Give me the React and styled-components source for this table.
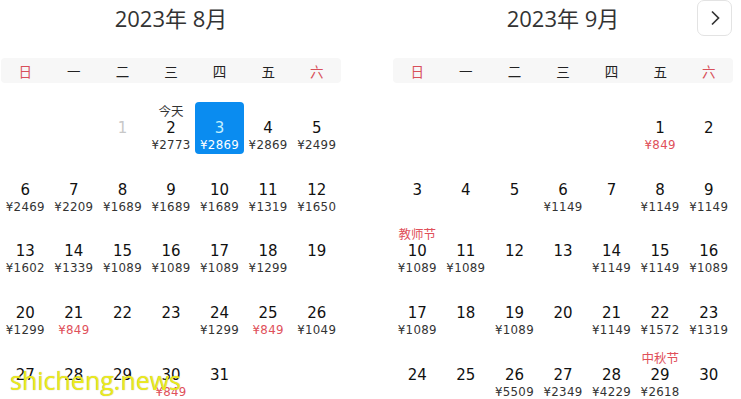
import React from 'react'
import styled, { createGlobalStyle } from 'styled-components'

const GlobalStyle = createGlobalStyle`
  html, body {
    margin: 0;
    padding: 0;
    background: #fff;
  }
  body {
    font-family: 'DejaVu Sans', 'Noto Sans CJK SC', sans-serif;
    color: #222;
  }
`

const WEEKDAYS = ['日', '一', '二', '三', '四', '五', '六']

// price: number, cheap: red price, label: text above the day
const MONTHS = [
  {
    title: '2023年 8月',
    offset: 2,
    days: 31,
    info: {
      1: { disabled: true },
      2: { price: 2773, label: '今天', labelTone: 'plain' },
      3: { price: 2869, selected: true },
      4: { price: 2869 },
      5: { price: 2499 },
      6: { price: 2469 },
      7: { price: 2209 },
      8: { price: 1689 },
      9: { price: 1689 },
      10: { price: 1689 },
      11: { price: 1319 },
      12: { price: 1650 },
      13: { price: 1602 },
      14: { price: 1339 },
      15: { price: 1089 },
      16: { price: 1089 },
      17: { price: 1089 },
      18: { price: 1299 },
      20: { price: 1299 },
      21: { price: 849, cheap: true },
      24: { price: 1299 },
      25: { price: 849, cheap: true },
      26: { price: 1049 },
      30: { price: 849, cheap: true },
    },
  },
  {
    title: '2023年 9月',
    offset: 5,
    days: 30,
    next: true,
    info: {
      1: { price: 849, cheap: true },
      6: { price: 1149 },
      8: { price: 1149 },
      9: { price: 1149 },
      10: { price: 1089, label: '教师节' },
      11: { price: 1089 },
      14: { price: 1149 },
      15: { price: 1149 },
      16: { price: 1089 },
      17: { price: 1089 },
      19: { price: 1089 },
      21: { price: 1149 },
      22: { price: 1572 },
      23: { price: 1319 },
      26: { price: 5509 },
      27: { price: 2349 },
      28: { price: 4229 },
      29: { price: 2618, label: '中秋节' },
    },
  },
]

const Page = styled.div`
  position: relative;
  display: flex;
  gap: 52px;
  padding-left: 1px;
  height: 399px;
  overflow: hidden;
`

const Month = styled.section`
  width: 340px;
  flex: none;
`

const Header = styled.header`
  display: grid;
  grid-template-columns: 1fr auto 1fr;
  align-items: center;
  height: 36px;
`

const Title = styled.h2`
  grid-column: 2;
  margin: 0;
  font-family: 'Open Sans', 'Noto Sans CJK SC', sans-serif;
  font-weight: 400;
  font-size: 22px;
  color: #333;
  line-height: 36px;
`

const NextButton = styled.button`
  grid-column: 3;
  justify-self: end;
  margin-right: 1px;
  margin-top: -1px;
  width: 35px;
  height: 36px;
  display: flex;
  align-items: center;
  justify-content: center;
  padding: 0;
  background: #fff;
  border: 1px solid #e3e3e3;
  border-radius: 7px;
`

const WeekBar = styled.div`
  display: grid;
  grid-template-columns: repeat(7, 1fr);
  margin-top: 22px;
  height: 25px;
  align-items: center;
  background: #f7f7f7;
  border-radius: 4px;
`

const WeekDay = styled.span`
  text-align: center;
  font-family: 'Noto Sans CJK SC', sans-serif;
  font-size: 13.5px;
  color: ${p => (p.$weekend ? '#d8505a' : '#222')};
`

const Days = styled.div`
  display: grid;
  grid-template-columns: repeat(7, 1fr);
  grid-auto-rows: 61.75px;
  margin-top: 14px;
`

const Cell = styled.div`
  display: flex;
  align-items: center;
  justify-content: center;
`

const CellBody = styled.div`
  width: 100%;
  height: 52px;
  display: flex;
  flex-direction: column;
  align-items: center;
  border-radius: 4px;
  background: ${p => (p.$selected ? '#0a8cf0' : 'transparent')};
`

const Label = styled.div`
  height: 17px;
  line-height: 17px;
  font-family: 'Noto Sans CJK SC', sans-serif;
  font-size: 12.5px;
  color: ${p => (p.$plain ? '#333' : '#e0505a')};
`

const DayNum = styled.div`
  height: 18px;
  line-height: 18px;
  font-size: 15px;
  color: ${p => (p.$selected ? '#c4f1ff' : p.$disabled ? '#c8c8c8' : '#111')};
`

const Price = styled.div`
  height: 17px;
  line-height: 17px;
  font-size: 11.8px;
  letter-spacing: 0.3px;
  white-space: nowrap;
  color: ${p => (p.$selected ? '#fff' : p.$cheap ? '#e0505a' : '#333')};
`

const Watermark = styled.div`
  position: absolute;
  left: 10px;
  top: 363px;
  font-family: 'Open Sans', sans-serif;
  font-size: 25px;
  line-height: 1.36;
  color: #ecea1c;
  text-shadow: 0 0 1px rgba(120, 120, 0, 0.6);
  pointer-events: none;
`

const Chevron = () => (
  <svg width="10" height="16" viewBox="0 0 10 16">
    <polyline points="2,1.5 8.5,8 2,14.5" fill="none" stroke="#333" strokeWidth="1.7" />
  </svg>
)

const DayCell = ({ day, info = {} }) => (
  <Cell>
    <CellBody $selected={info.selected}>
      <Label $plain={info.labelTone === 'plain'}>{info.label}</Label>
      <DayNum $selected={info.selected} $disabled={info.disabled}>
        {day}
      </DayNum>
      <Price $selected={info.selected} $cheap={info.cheap}>
        {info.price ? `¥${info.price}` : ''}
      </Price>
    </CellBody>
  </Cell>
)

const MonthView = ({ month }) => {
  const blanks = Array.from({ length: month.offset })
  const days = Array.from({ length: month.days }, (_, i) => i + 1)
  return (
    <Month>
      <Header>
        <Title>{month.title}</Title>
        {month.next && (
          <NextButton aria-label="下个月">
            <Chevron />
          </NextButton>
        )}
      </Header>
      <WeekBar>
        {WEEKDAYS.map((w, i) => (
          <WeekDay key={w} $weekend={i === 0 || i === 6}>
            {w}
          </WeekDay>
        ))}
      </WeekBar>
      <Days>
        {blanks.map((_, i) => (
          <Cell key={`b${i}`} />
        ))}
        {days.map(d => (
          <DayCell key={d} day={d} info={month.info[d]} />
        ))}
      </Days>
    </Month>
  )
}

export default function App() {
  return (
    <>
      <GlobalStyle />
      <Page>
        {MONTHS.map(m => (
          <MonthView key={m.title} month={m} />
        ))}
        <Watermark>shicheng.news</Watermark>
      </Page>
    </>
  )
}
